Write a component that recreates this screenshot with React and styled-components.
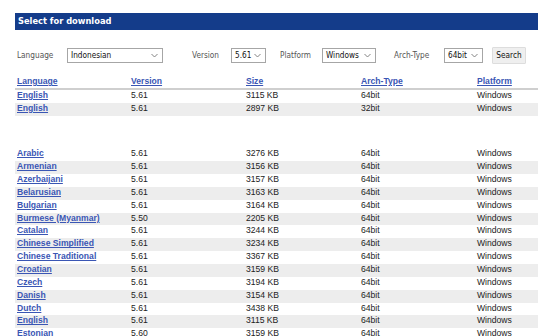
import React from "react";
import styled, { createGlobalStyle } from "styled-components";

const GlobalStyle = createGlobalStyle`
  body {
    margin: 0;
    background: #ffffff;
  }
`;

const featured = [
  { name: "English", version: "5.61", size: "3115 KB", arch: "64bit" },
  { name: "English", version: "5.61", size: "2897 KB", arch: "32bit" },
];

const languages = [
  ["Arabic", "5.61", "3276 KB"],
  ["Armenian", "5.61", "3156 KB"],
  ["Azerbaijani", "5.61", "3157 KB"],
  ["Belarusian", "5.61", "3163 KB"],
  ["Bulgarian", "5.61", "3164 KB"],
  ["Burmese (Myanmar)", "5.50", "2205 KB"],
  ["Catalan", "5.61", "3244 KB"],
  ["Chinese Simplified", "5.61", "3234 KB"],
  ["Chinese Traditional", "5.61", "3367 KB"],
  ["Croatian", "5.61", "3159 KB"],
  ["Czech", "5.61", "3194 KB"],
  ["Danish", "5.61", "3154 KB"],
  ["Dutch", "5.61", "3438 KB"],
  ["English", "5.61", "3115 KB"],
  ["Estonian", "5.60", "3159 KB"],
];

function Chevron() {
  return (
    <svg width="7" height="5" viewBox="0 0 7 5">
      <path d="M0.5 1 L3.5 4 L6.5 1" fill="none" stroke="#777" strokeWidth="0.9" />
    </svg>
  );
}

function Dropdown({ value, width }) {
  return (
    <SelectBox $width={width}>
      <span>{value}</span>
      <Chevron />
    </SelectBox>
  );
}

function Columns() {
  return (
    <colgroup>
      <col style={{ width: 114 }} />
      <col style={{ width: 115 }} />
      <col style={{ width: 115 }} />
      <col style={{ width: 116 }} />
      <col />
    </colgroup>
  );
}

export default function App() {
  return (
    <Page>
      <GlobalStyle />
      <TitleBar>Select for download</TitleBar>

      <FilterForm>
        <Label>Language</Label>
        <Dropdown value="Indonesian" width={96} />
        <Label>Version</Label>
        <Dropdown value="5.61" width={35} />
        <Label>Platform</Label>
        <Dropdown value="Windows" width={54} />
        <Label>Arch-Type</Label>
        <Dropdown value="64bit" width={39} />
        <SearchButton type="button">Search</SearchButton>
      </FilterForm>

      <Table>
        <Columns />
        <thead>
          <tr>
            <Th><a href="#">Language</a></Th>
            <Th><a href="#">Version</a></Th>
            <Th><a href="#">Size</a></Th>
            <Th><a href="#">Arch-Type</a></Th>
            <Th><a href="#">Platform</a></Th>
          </tr>
        </thead>
        <tbody>
          {featured.map((row, i) => (
            <Row key={i} $shaded={i % 2 === 1}>
              <Td><Link href="#">{row.name}</Link></Td>
              <Td>{row.version}</Td>
              <Td>{row.size}</Td>
              <Td>{row.arch}</Td>
              <Td>Windows</Td>
            </Row>
          ))}
        </tbody>
      </Table>

      <Table $spaced>
        <Columns />
        <tbody>
          {languages.map(([name, version, size], i) => (
            <Row key={name + i} $shaded={i % 2 === 1}>
              <Td><Link href="#">{name}</Link></Td>
              <Td>{version}</Td>
              <Td>{size}</Td>
              <Td>64bit</Td>
              <Td>Windows</Td>
            </Row>
          ))}
        </tbody>
      </Table>
    </Page>
  );
}

const Page = styled.div`
  width: 538px;
  padding: 12.5px 0 0 15px;
  height: 336px;
  box-sizing: border-box;
  overflow: hidden;
`;

const TitleBar = styled.div`
  height: 17px;
  line-height: 17px;
  padding-left: 3px;
  background: #143c8a;
  color: #ffffff;
  font-family: "DejaVu Sans", Verdana, sans-serif;
  font-weight: bold;
  font-size: 8.3px;
`;

const FilterForm = styled.div`
  display: grid;
  grid-template-columns: 50px 125px 39px 49px 42px 72px 50px 48px auto;
  align-items: center;
  height: 18px;
  margin-top: 16.5px;
  padding-left: 2px;
  font-family: "DejaVu Sans Condensed", "DejaVu Sans", sans-serif;
  font-size: 8.2px;
`;

const Label = styled.span`
  color: #555555;
`;

const SelectBox = styled.div`
  display: flex;
  align-items: center;
  justify-content: space-between;
  box-sizing: border-box;
  width: ${(p) => p.$width}px;
  height: 15px;
  padding: 0 4px 0 3px;
  border: 1px solid #a6a6a6;
  background: #ffffff;
  color: #111111;
`;

const SearchButton = styled.button`
  box-sizing: border-box;
  width: 34px;
  height: 17px;
  padding: 0;
  border: 1px solid #dddddd;
  border-radius: 1px;
  background: #efefef;
  color: #111111;
  font-family: inherit;
  font-size: 8.2px;
`;

const Table = styled.table`
  width: 523px;
  table-layout: fixed;
  border-collapse: collapse;
  margin-top: ${(p) => (p.$spaced ? "32.6px" : "12px")};
  font-family: "Liberation Sans", Arial, sans-serif;
  font-size: 8.6px;
  color: #222222;
`;

const Th = styled.th`
  height: 12px;
  padding: 0 0 0 2px;
  text-align: left;
  line-height: 11px;
  vertical-align: top;
  border-bottom: 2px solid #cfcfcf;

  a {
    color: #3a56b4;
    font-weight: bold;
    text-decoration: underline;
  }
`;

const Row = styled.tr`
  background: ${(p) => (p.$shaded ? "#ededed" : "#ffffff")};
`;

const Td = styled.td`
  height: 12.86px;
  padding: 0 0 0 2px;
  line-height: 11px;
  vertical-align: top;
  white-space: nowrap;
  overflow: hidden;
`;

const Link = styled.a`
  color: #3a56b4;
  font-weight: bold;
  text-decoration: underline;
`;
